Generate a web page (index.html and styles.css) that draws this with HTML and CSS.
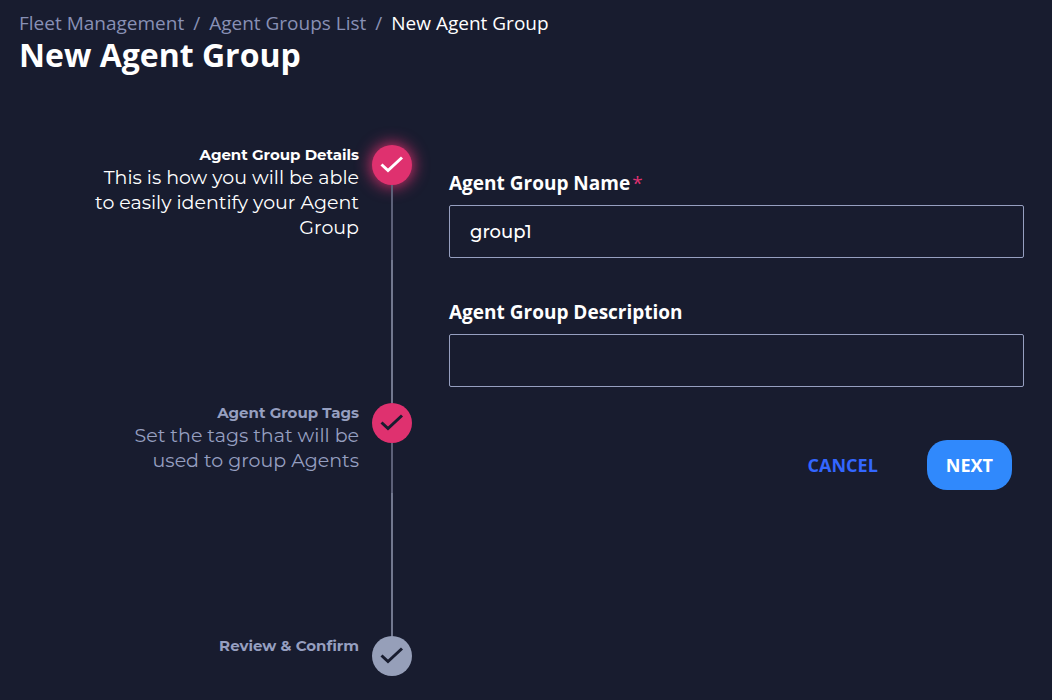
FILE: index.html
```html
<!DOCTYPE html>
<html lang="en">
<head>
<meta charset="utf-8">
<meta name="viewport" content="width=device-width, initial-scale=1">
<title>New Agent Group</title>
<link rel="stylesheet" href="styles.css">
</head>
<body>
<header class="header">
  <nav aria-label="Breadcrumb">
    <ol class="breadcrumb">
      <li><a href="#fleet">Fleet Management</a></li>
      <li><a href="#groups">Agent Groups List</a></li>
      <li class="current" aria-current="page">New Agent Group</li>
    </ol>
  </nav>
  <h1 class="title">New Agent Group</h1>
</header>
<main class="wizard">
  <ol class="stepper">
    <li class="step active">
      <div class="step-text">
        <h2 class="step-label">Agent Group Details</h2>
        <p class="step-desc">This is how you will be able to easily identify your Agent Group</p>
      </div>
      <div class="rail">
        <span class="marker"><svg class="check" viewBox="0 0 24 18" aria-hidden="true"><path d="M1.5 8.5 8 14.5 22 1.5"/></svg></span>
        <span class="line upper"></span>
        <span class="line lower"></span>
      </div>
    </li>
    <li class="step visited">
      <div class="step-text">
        <h2 class="step-label">Agent Group Tags</h2>
        <p class="step-desc">Set the tags that will be used to group Agents</p>
      </div>
      <div class="rail">
        <span class="marker"><svg class="check" viewBox="0 0 24 18" aria-hidden="true"><path d="M1.5 8.5 8 14.5 22 1.5"/></svg></span>
        <span class="line upper"></span>
        <span class="line lower"></span>
      </div>
    </li>
    <li class="step">
      <div class="step-text">
        <h2 class="step-label">Review &amp; Confirm</h2>
      </div>
      <div class="rail">
        <span class="marker"><svg class="check" viewBox="0 0 24 18" aria-hidden="true"><path d="M1.5 8.5 8 14.5 22 1.5"/></svg></span>
      </div>
    </li>
  </ol>
  <form class="form">
    <div class="field">
      <label class="label" for="name">Agent Group Name<span class="required">*</span></label>
      <input class="input" id="name" type="text" value="group1" required>
    </div>
    <div class="field">
      <label class="label" for="description">Agent Group Description</label>
      <input class="input" id="description" type="text">
    </div>
    <div class="actions">
      <button class="button cancel" type="button">CANCEL</button>
      <button class="button next" type="submit">NEXT</button>
    </div>
  </form>
</main>
</body>
</html>
```

FILE: styles.css
```css
* {
  box-sizing: border-box;
}

body {
  margin: 0;
  background: #181c2f;
  color: #fff;
  font-family: "Open Sans", sans-serif;
}

h1, h2, p, ol {
  margin: 0;
  padding: 0;
}

ol {
  list-style: none;
}

.header {
  padding: 10px 19px 0;
}

.breadcrumb {
  display: flex;
  font-size: 19px;
  line-height: 26px;
}

.breadcrumb a {
  color: #8890b5;
  text-decoration: none;
}

.breadcrumb li + li::before {
  content: "/";
  padding: 0 9px;
  color: #8890b5;
}

.breadcrumb .current {
  color: #fff;
}

.title {
  font-size: 32px;
  line-height: 38px;
  font-weight: 700;
}

.wizard {
  display: grid;
  grid-template-columns: 392px 1fr;
  gap: 37px;
  padding: 71px 28px 24px 20px;
}

.step {
  display: grid;
  grid-template-columns: 1fr 40px;
  gap: 13px;
  color: #969fc0;
}

.step.active {
  color: #fff;
}

.step-text {
  font-family: Montserrat, Inter, sans-serif;
  text-align: right;
  padding-left: 72px;
}

.step-label {
  font-size: 15px;
  line-height: 20px;
  font-weight: 700;
}

.step-desc {
  font-size: 19px;
  line-height: 25px;
  padding-bottom: 163px;
}

.rail {
  display: flex;
  flex-direction: column;
  align-items: center;
}

.marker {
  display: flex;
  flex: none;
  align-items: center;
  justify-content: center;
  width: 40px;
  height: 40px;
  border-radius: 50%;
  background: #969fb9;
  color: #181c2f;
}

.active .marker,
.visited .marker {
  background: #df316f;
}

.active .marker {
  color: #fff;
  box-shadow: 0 0 16px 1px #df316f;
}

.check {
  width: 24px;
  height: 18px;
  fill: none;
  stroke: currentColor;
  stroke-width: 3;
}

.line {
  width: 2px;
  background: #72788f;
}

.line.upper {
  flex: 1;
  background: #5c6078;
}

.line.lower {
  height: 143px;
}

.form {
  padding-top: 25px;
}

.field {
  margin-bottom: 41px;
}

.label {
  display: block;
  margin-bottom: 9px;
  font-size: 19px;
  line-height: 26px;
  font-weight: 700;
}

.required {
  margin-left: 2px;
  color: #df316f;
  font-weight: 400;
}

.input {
  display: block;
  width: 100%;
  height: 53px;
  padding: 0 20px;
  border: 1px solid #969fc0;
  border-radius: 2px;
  background: transparent;
  color: #fff;
  font-family: Montserrat, Inter, sans-serif;
  font-size: 18px;
  font-weight: 500;
}

.actions {
  display: flex;
  justify-content: flex-end;
  gap: 30px;
  padding: 12px 12px 0 0;
}

.button {
  height: 50px;
  padding: 0 19px;
  border: 0;
  border-radius: 20px;
  background: transparent;
  font-family: inherit;
  font-size: 18px;
  font-weight: 700;
  cursor: pointer;
}

.cancel {
  color: #3366ff;
}

.next {
  background: #3089fc;
  color: #fff;
}
```
